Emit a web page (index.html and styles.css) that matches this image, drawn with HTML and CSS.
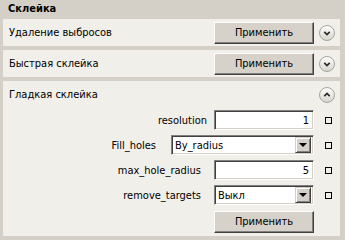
FILE: index.html
```html
<!DOCTYPE html>
<html lang="ru">
<head>
  <meta charset="UTF-8">
  <title>Склейка</title>
  <link rel="stylesheet" href="styles.css">
</head>
<body>
  <div class="header">Склейка</div>

  <div class="panels">
    <!-- Удаление выбросов -->
    <div class="panel">
      <span class="panel-title">Удаление выбросов</span>
      <button class="btn">Применить</button>
      <svg class="toggle" width="16" height="16" viewBox="0 0 16 16">
        <defs>
          <linearGradient id="g1" x1="0" y1="0" x2="0" y2="1">
            <stop offset="0" stop-color="#ffffff"/>
            <stop offset="1" stop-color="#d6d3cc"/>
          </linearGradient>
        </defs>
        <circle cx="8" cy="8" r="7.5" fill="url(#g1)" stroke="#a7a49d"/>
        <path d="M5.3 6.8 L8 9.5 L10.7 6.8" fill="none" stroke="#2a2a2a" stroke-width="1.7"/>
      </svg>
    </div>

    <!-- Быстрая склейка -->
    <div class="panel">
      <span class="panel-title">Быстрая склейка</span>
      <button class="btn">Применить</button>
      <svg class="toggle" width="16" height="16" viewBox="0 0 16 16">
        <circle cx="8" cy="8" r="7.5" fill="url(#g1)" stroke="#a7a49d"/>
        <path d="M5.3 6.8 L8 9.5 L10.7 6.8" fill="none" stroke="#2a2a2a" stroke-width="1.7"/>
      </svg>
    </div>

    <!-- Гладкая склейка -->
    <div class="panel panel-open">
      <div class="panel-head">
        <span class="panel-title">Гладкая склейка</span>
        <svg class="toggle" width="16" height="16" viewBox="0 0 16 16">
          <circle cx="8" cy="8" r="7.5" fill="url(#g1)" stroke="#a7a49d"/>
          <path d="M5.3 9.2 L8 6.5 L10.7 9.2" fill="none" stroke="#2a2a2a" stroke-width="1.7"/>
        </svg>
      </div>

      <div class="form">
        <div class="row">
          <label class="lbl lbl-resolution">resolution</label>
          <input class="field" type="text" value="1" readonly>
          <span class="check"></span>
        </div>
        <div class="row">
          <label class="lbl lbl-fill">Fill_holes</label>
          <div class="combo combo-wide">
            <span class="combo-text">By_radius</span>
            <span class="combo-arrow"></span>
          </div>
          <span class="check"></span>
        </div>
        <div class="row">
          <label class="lbl lbl-max">max_hole_radius</label>
          <input class="field" type="text" value="5" readonly>
          <span class="check"></span>
        </div>
        <div class="row">
          <label class="lbl lbl-remove">remove_targets</label>
          <div class="combo">
            <span class="combo-text">Выкл</span>
            <span class="combo-arrow"></span>
          </div>
          <span class="check"></span>
        </div>
        <div class="row row-btn">
          <button class="btn">Применить</button>
          <span class="check-space"></span>
        </div>
      </div>
    </div>
  </div>
</body>
</html>
```

FILE: styles.css
```css
body {
  margin: 0;
  padding: 0;
  width: 345px;
  height: 240px;
  overflow: hidden;
  background-color: #d4d0c8;
  font-family: "DejaVu Sans Condensed", "Liberation Sans", sans-serif;
  font-size: 11px;
  color: #000;
}
.header {
  height: 19px;
  line-height: 17px;
  padding-left: 8px;
  font-weight: bold;
}
.panels {
  display: flex;
  flex-direction: column;
  gap: 4px;
  padding: 0 5px 0 3px;
}
.panel {
  display: flex;
  align-items: center;
  height: 27px;
  padding: 0 5px 0 6px;
  background-color: #f1efe9;
}
.panel-title {
  flex: 1;
}
.toggle {
  display: block;
  margin-left: 5px;
}
.btn {
  width: 100px;
  height: 22px;
  padding: 0;
  font-family: inherit;
  font-size: 11px;
  color: #000;
  background-color: #d6d2ca;
  border: 1px solid;
  border-color: #ffffff #404040 #404040 #ffffff;
  box-shadow: inset -1px -1px 0 #808080;
}
.panel-open {
  display: block;
  height: 155px;
  padding: 0;
}
.panel-head {
  display: flex;
  align-items: center;
  height: 27px;
  padding: 0 5px 0 6px;
}
.form {
  display: flex;
  flex-direction: column;
  gap: 5px;
  margin-top: 2px;
}
.row {
  display: flex;
  align-items: center;
  justify-content: flex-end;
  height: 20px;
  padding-right: 8px;
}
.row-btn {
  height: 23px;
}
.lbl {
  margin-right: 7px;
}
.lbl-fill {
  margin-right: 15px;
}
.lbl-max,
.lbl-remove {
  margin-right: 13px;
}
.field {
  box-sizing: border-box;
  width: 100px;
  height: 20px;
  margin: 0;
  padding: 0 4px;
  font-family: inherit;
  font-size: 11px;
  text-align: right;
  background-color: #fff;
  border: 1px solid;
  border-color: #808080 #ffffff #ffffff #808080;
  box-shadow: inset 1px 1px 0 #404040, inset -1px -1px 0 #d4d0c8;
  outline: none;
}
.combo {
  box-sizing: border-box;
  display: flex;
  align-items: center;
  width: 100px;
  height: 20px;
  padding: 2px;
  background-color: #fff;
  border: 1px solid;
  border-color: #808080 #ffffff #ffffff #808080;
  box-shadow: inset 1px 1px 0 #404040, inset -1px -1px 0 #d4d0c8;
}
.combo-wide {
  width: 143px;
}
.combo-text {
  flex: 1;
  padding-left: 1px;
}
.combo-arrow {
  box-sizing: border-box;
  position: relative;
  width: 16px;
  height: 16px;
  background-color: #d4d0c8;
  border: 1px solid;
  border-color: #d4d0c8 #404040 #404040 #d4d0c8;
  box-shadow: inset 1px 1px 0 #fff, inset -1px -1px 0 #808080;
}
.combo-arrow::after {
  content: "";
  position: absolute;
  left: 3px;
  top: 5px;
  border-left: 4px solid transparent;
  border-right: 4px solid transparent;
  border-top: 4px solid #000;
}
.check {
  box-sizing: border-box;
  width: 7px;
  height: 7px;
  margin-left: 11px;
  border: 1px solid #000;
}
.check-space {
  width: 7px;
  margin-left: 11px;
}
```
